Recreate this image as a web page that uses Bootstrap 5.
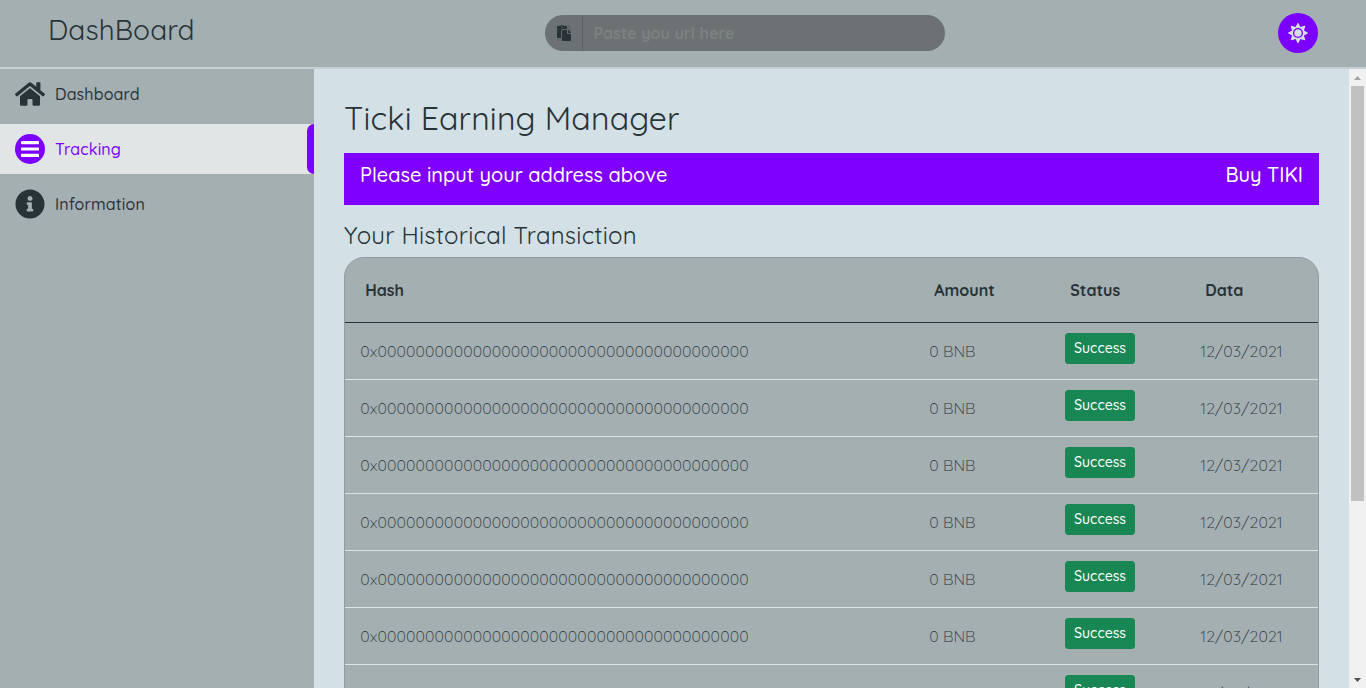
<!DOCTYPE html>
<html lang="en">
<head>
<meta charset="utf-8">
<title>DashBoard</title>
<link href="https://cdn.jsdelivr.net/npm/bootstrap@5.3.0/dist/css/bootstrap.min.css" rel="stylesheet">
<style>
body{height:100vh;overflow:hidden;font-family:Quicksand,Lato,sans-serif;color:#283338;background:#d3e1e6;display:flex;flex-direction:column}
.topbar{height:69px;flex:none;background:#a4afb1;border-bottom:2px solid #c6d0d2;padding:0 48px 0 48px}
.brand{font-size:28px;line-height:34px;width:497px;padding-top:13px;letter-spacing:.15px}
.search{width:400px;height:36px;border-radius:18px;background:#6c7274;margin-top:15px;overflow:hidden}
.search .clip{width:38px;border-right:1px solid #5c6263}
.search .clip svg{background:#63696a}
.search input{background:transparent;border:0;box-shadow:none!important;padding:0 10.5px;font-weight:700}
.search input::placeholder{color:#7e8182;opacity:1}
.theme{width:40px;height:40px;border-radius:50%;background:#7b00ff;margin-top:13px}
.side{width:314px;background:#a4afb1;flex:none;gap:5px}
.side a{height:50px;padding-left:15px;gap:10px;color:#283338;text-decoration:none;font-weight:500;letter-spacing:.15px}
.side a.on{background:#e1e5e6;color:#7b00ff}
.side a.on::after{content:"";margin-left:auto;width:7px;height:50px;background:#7b00ff;border-radius:7px 0 0 7px}
.main{padding:30px 30px 0;overflow:hidden;min-width:0}
h1{font-size:32px;line-height:38px;margin:0 0 16px;font-weight:400;letter-spacing:.2px}
.notice{height:52px;background:#7f00ff;color:#fff;font-size:20px;line-height:24px;padding:10px 16px;font-weight:500}
h2{font-size:24px;line-height:29px;margin:16px 0 7px;font-weight:400;letter-spacing:.22px}
.panel{border:1px solid #929c9d;border-radius:20px 20px 0 0;background:#a4afb1;overflow:hidden}
.panel table{table-layout:fixed;margin:0;--bs-table-bg:transparent;--bs-table-color:#283338;width:973px}
.panel th{height:64px;padding:0 0 0 20.3px;vertical-align:middle;border-bottom:1px solid #283338;font-weight:700}
.panel td{height:57px;padding:0 0 0 15.3px;vertical-align:middle;border-bottom:1px solid #dce3e4;font-weight:300}
.panel td:first-child,.panel td:last-child{letter-spacing:.11px}
.panel td.st{vertical-align:top;padding:10px 0 0 15px}
.btn-success{width:70px;height:31px;padding:0;font-size:14px;line-height:29px;border-radius:3px;background:#198754;font-weight:500}
.sbar{width:17px;flex:none;background:#f1f1f1;padding:7px 0 6px}
.thumb{width:13px;height:415px;background:#c1c1c1;margin-top:6px}
</style>
</head>
<body>
<header class="topbar d-flex align-items-start">
  <div class="brand">DashBoard</div>
  <div class="search d-flex">
    <span class="clip d-flex align-items-center justify-content-center flex-shrink-0"><svg width="14" height="16" viewBox="0 0 448 512" fill="#283338"><path d="M128 184c0-30.879 25.122-56 56-56h136V56c0-13.255-10.745-24-24-24h-80.61C204.306 12.89 183.637 0 160 0s-44.306 12.89-55.39 32H24C10.745 32 0 42.745 0 56v336c0 13.255 10.745 24 24 24h104V184zm32-144c13.255 0 24 10.745 24 24s-10.745 24-24 24-24-10.745-24-24 10.745-24 24-24zm184 248h104v200c0 13.255-10.745 24-24 24H184c-13.255 0-24-10.745-24-24V184c0-13.255 10.745-24 24-24h136v104c0 13.2 10.8 24 24 24zm104-38.059V256h-96v-96h6.059a24 24 0 0 1 16.97 7.029l65.941 65.941a24.002 24.002 0 0 1 7.03 16.971z"/></svg></span>
    <input class="form-control" placeholder="Paste you url here">
  </div>
  <div class="theme ms-auto d-flex align-items-center justify-content-center"><svg width="20" height="20" viewBox="0 0 512 512" fill="#d3e1e6"><path d="M256 160c-52.9 0-96 43.1-96 96s43.1 96 96 96 96-43.1 96-96-43.1-96-96-96zm246.4 80.5l-94.7-47.3 33.5-100.4c4.5-13.6-8.4-26.5-21.9-21.9l-100.4 33.5-47.4-94.8c-6.4-12.8-24.6-12.8-31 0l-47.3 94.7L92.7 70.8c-13.6-4.5-26.5 8.4-21.9 21.9l33.5 100.4-94.7 47.4c-12.8 6.4-12.8 24.6 0 31l94.7 47.3-33.5 100.5c-4.5 13.6 8.4 26.5 21.9 21.9l100.4-33.5 47.3 94.7c6.4 12.8 24.6 12.8 31 0l47.3-94.7 100.4 33.5c13.6 4.5 26.5-8.4 21.9-21.9l-33.5-100.4 94.7-47.3c13-6.5 13-24.7.2-31.1zm-155.9 106c-49.9 49.9-131.1 49.9-181 0-49.9-49.9-49.9-131.1 0-181 49.9-49.9 131.1-49.9 181 0 49.9 49.9 49.9 131.1 0 181z"/></svg></div>
</header>
<div class="d-flex flex-grow-1 overflow-hidden">
  <nav class="side d-flex flex-column">
    <a href="#" class="d-flex align-items-center"><svg width="30" height="30" viewBox="0 0 576 512" fill="currentColor"><path d="M280.37 148.26L96 300.11V464a16 16 0 0 0 16 16l112.06-.29a16 16 0 0 0 15.92-16V368a16 16 0 0 1 16-16h64a16 16 0 0 1 16 16v95.64a16 16 0 0 0 16 16.05L464 480a16 16 0 0 0 16-16V300L295.67 148.26a12.19 12.19 0 0 0-15.3 0zM571.6 251.47L488 182.56V44.05a12 12 0 0 0-12-12h-56a12 12 0 0 0-12 12v72.61L318.47 43a48 48 0 0 0-61 0L4.34 251.47a12 12 0 0 0-1.6 16.9l25.5 31A12 12 0 0 0 45.15 301l235.22-193.74a12.19 12.19 0 0 1 15.3 0L530.9 301a12 12 0 0 0 16.9-1.6l25.5-31a12 12 0 0 0-1.7-16.93z"/></svg><span>Dashboard</span></a>
    <a href="#" class="on d-flex align-items-center"><svg width="30" height="30" viewBox="0 0 30 30"><circle cx="15" cy="15" r="15" fill="#7b00ff"/><g fill="#fff"><rect x="6" y="7" width="18" height="3.2" rx=".6"/><rect x="6" y="13.4" width="18" height="3.2" rx=".6"/><rect x="6" y="19.8" width="18" height="3.2" rx=".6"/></g></svg><span>Tracking</span></a>
    <a href="#" class="d-flex align-items-center"><svg width="30" height="30" viewBox="0 0 512 512" fill="currentColor"><path d="M256 8C119.043 8 8 119.083 8 256c0 136.997 111.043 248 248 248s248-111.003 248-248C504 119.083 392.957 8 256 8zm0 110c23.196 0 42 18.804 42 42s-18.804 42-42 42-42-18.804-42-42 18.804-42 42-42zm56 254c0 6.627-5.373 12-12 12h-88c-6.627 0-12-5.373-12-12v-24c0-6.627 5.373-12 12-12h12v-64h-12c-6.627 0-12-5.373-12-12v-24c0-6.627 5.373-12 12-12h64c6.627 0 12 5.373 12 12v100h12c6.627 0 12 5.373 12 12v24z"/></svg><span>Information</span></a>
  </nav>
  <main class="main flex-grow-1">
    <h1>Ticki Earning Manager</h1>
    <div class="notice d-flex justify-content-between"><span>Please input your address above</span><span>Buy TIKI</span></div>
    <h2>Your Historical Transiction</h2>
    <div class="panel">
      <table class="table">
        <colgroup><col style="width:569px"><col style="width:136px"><col style="width:135px"><col></colgroup>
        <thead><tr><th>Hash</th><th>Amount</th><th>Status</th><th>Data</th></tr></thead>
        <tbody>
          <tr><td>0x000000000000000000000000000000000000000</td><td>0 BNB</td><td class="st"><button class="btn btn-success">Success</button></td><td>12/03/2021</td></tr>
          <tr><td>0x000000000000000000000000000000000000000</td><td>0 BNB</td><td class="st"><button class="btn btn-success">Success</button></td><td>12/03/2021</td></tr>
          <tr><td>0x000000000000000000000000000000000000000</td><td>0 BNB</td><td class="st"><button class="btn btn-success">Success</button></td><td>12/03/2021</td></tr>
          <tr><td>0x000000000000000000000000000000000000000</td><td>0 BNB</td><td class="st"><button class="btn btn-success">Success</button></td><td>12/03/2021</td></tr>
          <tr><td>0x000000000000000000000000000000000000000</td><td>0 BNB</td><td class="st"><button class="btn btn-success">Success</button></td><td>12/03/2021</td></tr>
          <tr><td>0x000000000000000000000000000000000000000</td><td>0 BNB</td><td class="st"><button class="btn btn-success">Success</button></td><td>12/03/2021</td></tr>
          <tr><td>0x000000000000000000000000000000000000000</td><td>0 BNB</td><td class="st"><button class="btn btn-success">Success</button></td><td>12/03/2021</td></tr>
        </tbody>
      </table>
    </div>
  </main>
  <div class="sbar d-flex flex-column align-items-center">
    <svg width="7" height="4" viewBox="0 0 7 4"><path d="M0 4 3.5 0 7 4z" fill="#a3a3a3"/></svg>
    <div class="thumb"></div>
    <svg class="mt-auto" width="7" height="4" viewBox="0 0 7 4"><path d="M0 0 3.5 4 7 0z" fill="#505050"/></svg>
  </div>
</div>
<script src="https://cdn.jsdelivr.net/npm/bootstrap@5.3.0/dist/js/bootstrap.bundle.min.js"></script>
</body>
</html>
